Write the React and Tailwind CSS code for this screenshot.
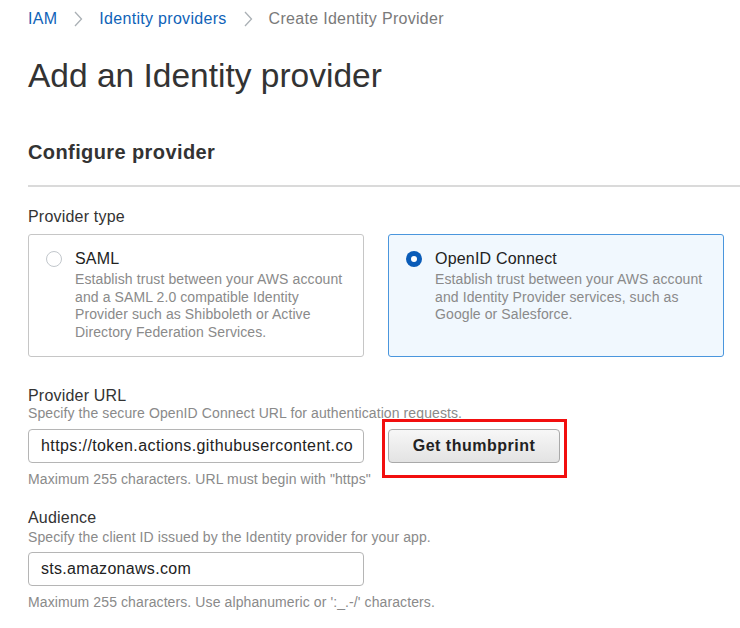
import React from "react";

function Chevron() {
  return (
    <svg width="10" height="16" viewBox="0 0 10 16" className="mx-[16px]">
      <polyline points="2,1 8.5,8 2,15" fill="none" stroke="#aab0b5" strokeWidth="1.3" />
    </svg>
  );
}

function Radio({ checked }) {
  if (checked) {
    return (
      <div className="w-[16px] h-[16px] rounded-full bg-[#0a5cb8] flex items-center justify-center shrink-0">
        <div className="w-[6px] h-[6px] rounded-full bg-white" />
      </div>
    );
  }
  return <div className="w-[16px] h-[16px] rounded-full border border-[#c2c7cc] bg-white shrink-0" />;
}

export default function App() {
  return (
    <div className="w-[740px] h-[628px] bg-white overflow-hidden font-['Liberation_Sans',Arial,sans-serif] text-[#333]">
      <div className="pl-[28px]">
        {/* breadcrumb */}
        <div className="mt-[9px] h-[20px] flex items-center text-[16px] leading-[20px] tracking-[0.3px]">
          <span className="text-[#0f63b8]">IAM</span>
          <Chevron />
          <span className="text-[#0f63b8]">Identity providers</span>
          <Chevron />
          <span className="text-[#7a7a7a]">Create Identity Provider</span>
        </div>

        <h1 className="mt-[27px] text-[33.5px] leading-[40px] text-[#333] font-normal">Add an Identity provider</h1>

        <h2 className="mt-[44px] text-[20px] leading-[24px] font-bold text-[#333] tracking-[0.4px]">Configure provider</h2>

        <div className="mt-[21px] h-[2px] bg-[#dadada]" />

        <div className="mt-[20px] text-[16px] leading-[20px] text-[#333] tracking-[0.2px]">Provider type</div>

        <div className="mt-[7px] flex gap-[24px]">
          <div className="w-[336px] h-[123px] rounded-[3px] border border-[#c6c6c6] bg-white flex pl-[17px] pt-[14px]">
            <div className="mt-[2px]"><Radio /></div>
            <div className="ml-[13px]">
              <div className="text-[16px] leading-[20px] text-[#222] tracking-[0.2px]">SAML</div>
              <div className="mt-[2px] text-[14px] leading-[17.7px] text-[#8a8a8a] w-[272px] tracking-[0.1px]">
                Establish trust between your AWS account and a SAML 2.0 compatible Identity Provider such as Shibboleth or Active Directory Federation Services.
              </div>
            </div>
          </div>
          <div className="w-[336px] h-[123px] rounded-[3px] border border-[#4a96dd] bg-[#f1f8fe] flex pl-[17px] pt-[14px]">
            <div className="mt-[2px]"><Radio checked /></div>
            <div className="ml-[13px]">
              <div className="text-[16px] leading-[20px] text-[#222] tracking-[0.2px]">OpenID Connect</div>
              <div className="mt-[2px] text-[14px] leading-[17.7px] text-[#8a8a8a] w-[272px] tracking-[0.1px]">
                Establish trust between your AWS account and Identity Provider services, such as Google or Salesforce.
              </div>
            </div>
          </div>
        </div>

        <div className="mt-[30px] text-[16px] leading-[17px] text-[#333] tracking-[0.2px]">Provider URL</div>
        <div className="mt-[1px] text-[14px] leading-[16px] text-[#8a8a8a] tracking-[0.1px]">Specify the secure OpenID Connect URL for authentication requests.</div>

        <div className="mt-[8px] flex gap-[24px]">
          <div className="w-[336px] h-[34px] rounded-[4px] border border-[#b5b5b5] bg-white flex items-center pl-[12px] overflow-hidden whitespace-nowrap text-[16px] text-[#222] tracking-[0.4px]">
            https://token.actions.githubusercontent.co
          </div>
          <div className="relative">
            <button className="w-[172px] h-[34px] rounded-[4px] border border-[#a9a9a9] bg-gradient-to-b from-[#f7f7f7] to-[#e3e3e3] text-[16px] font-bold text-[#222] tracking-[0.5px] font-['Liberation_Sans',Arial,sans-serif]">
              Get thumbprint
            </button>
            <span className="absolute left-[-6px] top-[-10px] right-[-7px] bottom-[-15px] border-[3px] border-[#f20f0f] pointer-events-none" />
          </div>
        </div>
        <div className="mt-[8px] text-[14px] leading-[16px] text-[#8a8a8a] tracking-[0.1px]">Maximum 255 characters. URL must begin with "https"</div>

        <div className="mt-[22px] text-[16px] leading-[17px] text-[#333] tracking-[0.2px]">Audience</div>
        <div className="mt-[3px] text-[14px] leading-[16px] text-[#8a8a8a] tracking-[0.1px]">Specify the client ID issued by the Identity provider for your app.</div>

        <div className="mt-[7px] w-[336px] h-[34px] rounded-[4px] border border-[#b5b5b5] bg-white flex items-center pl-[12px] text-[16px] text-[#222] tracking-[0.3px]">
          sts.amazonaws.com
        </div>
        <div className="mt-[8px] text-[14px] leading-[16px] text-[#8a8a8a] tracking-[0.1px]">Maximum 255 characters. Use alphanumeric or ':_.-/' characters.</div>
      </div>
    </div>
  );
}
